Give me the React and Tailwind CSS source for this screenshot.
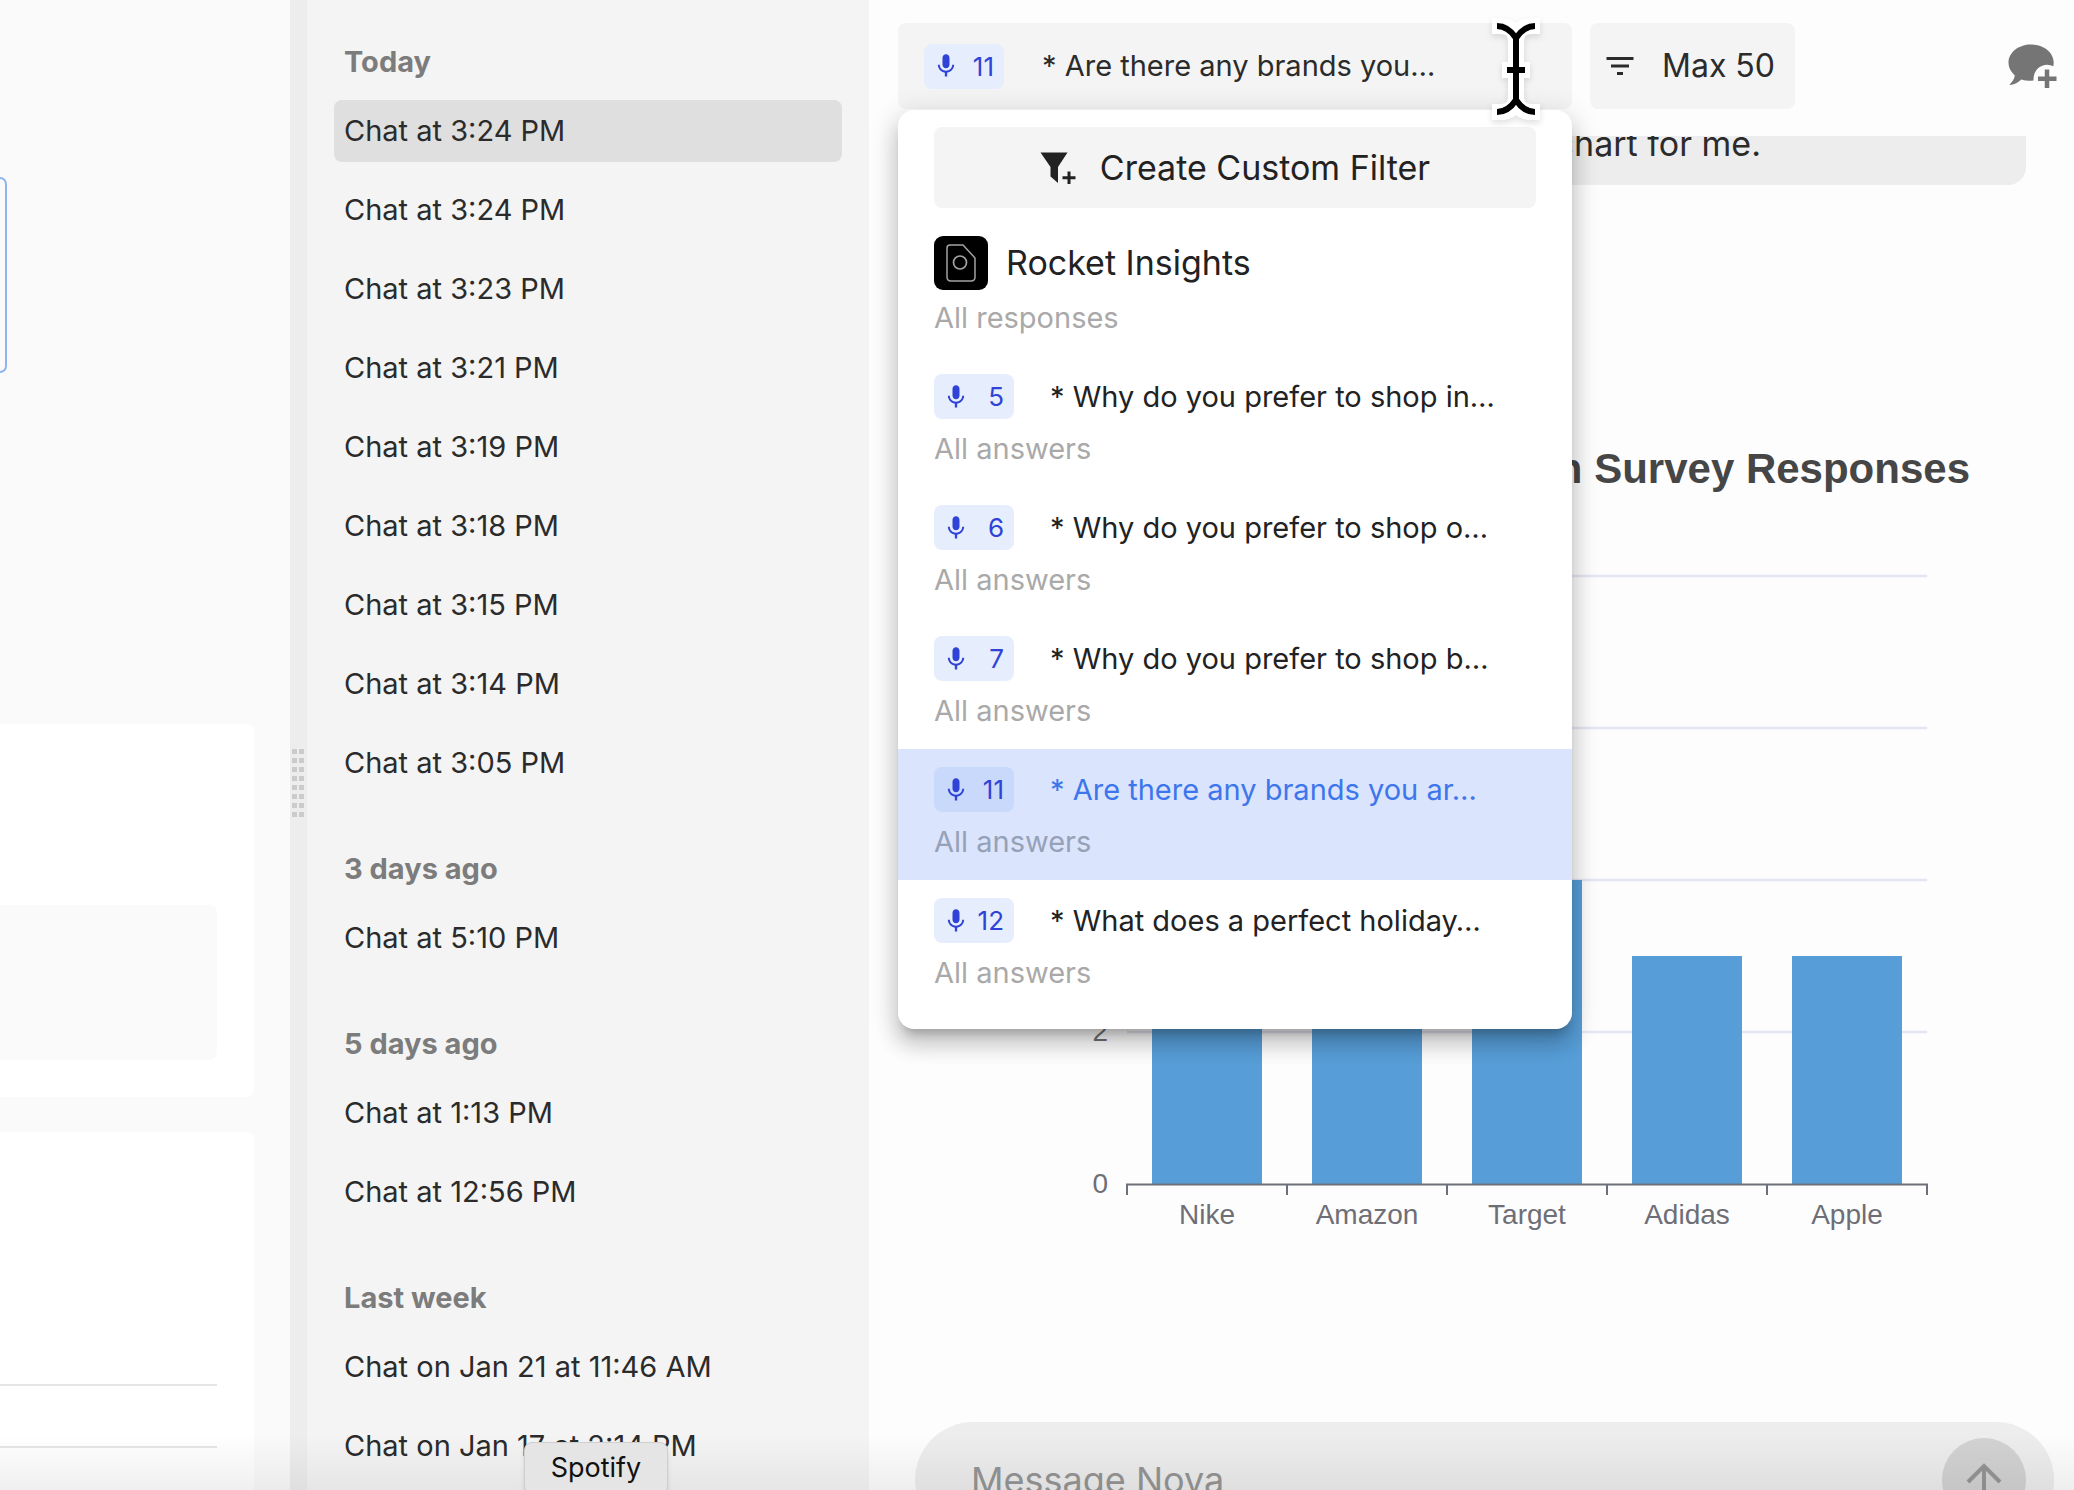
import React from 'react';
import { MdMic, MdFilterList } from 'react-icons/md';

const chatGroups = [
  {
    label: 'Today',
    chats: [
      'Chat at 3:24 PM',
      'Chat at 3:24 PM',
      'Chat at 3:23 PM',
      'Chat at 3:21 PM',
      'Chat at 3:19 PM',
      'Chat at 3:18 PM',
      'Chat at 3:15 PM',
      'Chat at 3:14 PM',
      'Chat at 3:05 PM',
    ],
  },
  { label: '3 days ago', chats: ['Chat at 5:10 PM'] },
  { label: '5 days ago', chats: ['Chat at 1:13 PM', 'Chat at 12:56 PM'] },
  { label: 'Last week', chats: ['Chat on Jan 21 at 11:46 AM', 'Chat on Jan 17 at 2:14 PM'] },
];

const questions = [
  { number: 5, text: '* Why do you prefer to shop in…' },
  { number: 6, text: '* Why do you prefer to shop o…' },
  { number: 7, text: '* Why do you prefer to shop b…' },
  { number: 11, text: '* Are there any brands you ar…', selected: true },
  { number: 12, text: '* What does a perfect holiday…' },
];

const bars = [
  { name: 'Nike', value: 8 },
  { name: 'Amazon', value: 6 },
  { name: 'Target', value: 4 },
  { name: 'Adidas', value: 3 },
  { name: 'Apple', value: 3 },
];

const FilterPlusIcon = () => (
  <svg className="w-9 h-8 shrink-0" viewBox="0 0 36 32" aria-hidden="true">
    <path d="M0.5 0.5H27.5L18 15V31L10.5 24.5V15Z" fill="#222" />
    <path d="M29 19.5V32M22.5 25.8H35.5" stroke="#222" strokeWidth="3" fill="none" />
  </svg>
);

const ChatPlusIcon = () => (
  <svg className="w-[49px] h-11" viewBox="0 0 49 44" aria-hidden="true">
    <path
      d="M23 0.5C10.500 0.500 0.500 8.500 0.500 18.500C0.500 23.500 3 28 6.800 31.300C6.500 34.500 4.500 38 1.200 41C6.500 40.800 10.500 38.500 13.200 35.500C17 36.700 21 37 25.500 36.500C25.200 27.500 30.500 21.500 38.500 20.800C41 20.700 43.500 21.500 45.200 22.300C45.500 21 45.700 19.800 45.700 18.500C45.700 8.500 35.500 0.500 23 0.500Z"
      fill="#757575"
    />
    <path d="M39 25.500V44M30 34.700H48.500" stroke="#757575" strokeWidth="4.500" fill="none" />
  </svg>
);

const RocketLogo = () => (
  <svg className="size-[54px] shrink-0" viewBox="0 0 54 54" aria-hidden="true">
    <rect width="54" height="54" rx="9" fill="#000" />
    <path
      d="M16 9H29L41 22V41Q41 45 37 45H17Q13 45 13 41V12Q13 9 16 9Z"
      fill="none"
      stroke="#a3a3a3"
      strokeWidth="1.500"
    />
    <circle cx="26" cy="26.500" r="6.500" fill="none" stroke="#a3a3a3" strokeWidth="1.700" />
  </svg>
);

const TextCursor = () => (
  <svg
    className="absolute right-8 -top-1.5 w-12 h-[104px] z-20 pointer-events-none overflow-visible drop-shadow-md"
    viewBox="0 0 48 104"
    fill="none"
    aria-hidden="true"
  >
    <g stroke="#fff" strokeWidth="16" strokeLinecap="square">
      <path d="M8 9Q24 9 24 25V79Q24 95 8 95" />
      <path d="M40 9Q24 9 24 25V79Q24 95 40 95" />
      <path d="M18 53H30" />
    </g>
    <g stroke="#000" strokeWidth="6">
      <path d="M5 9Q16 9 24 21V83Q16 95 5 95" />
      <path d="M43 9Q32 9 24 21V83Q32 95 43 95" />
      <path d="M15 53H33" />
    </g>
  </svg>
);

const QuestionBadge = ({ number, selected }) => (
  <span
    className={`flex items-center justify-between w-20 h-[45px] pl-2 pr-2.5 rounded-lg shrink-0 text-[26px] text-[#2f43d6] ${
      selected ? 'bg-[#c9d9fb]' : 'bg-[#e6edfd]'
    }`}
  >
    <MdMic className="size-7" />
    {number}
  </span>
);

const LeftPane = () => (
  <div className="w-[290px] shrink-0 bg-[#fafafa] flex flex-col pt-[177px] overflow-hidden">
    <div className="w-[7px] h-[196px] shrink-0 rounded-r-lg border-2 border-l-0 border-[#8eb4ef]"></div>
    <div className="mt-[351px] mr-9 h-[373px] shrink-0 bg-white rounded-r-lg pt-[181px] pr-[37px]">
      <div className="h-[155px] bg-[#fafafa] rounded-r-lg"></div>
    </div>
    <div className="mt-[35px] mr-9 h-[400px] shrink-0 bg-white rounded-tr-lg pt-[252px] pr-[37px]">
      <div className="h-[60px] border-y-2 border-[#e6e6e6] box-content"></div>
    </div>
  </div>
);

const Resizer = () => (
  <div className="w-[17px] shrink-0 bg-[#ededed] pt-[749px] pl-0.5" role="separator">
    <div className="grid grid-cols-2 gap-x-0.5 gap-y-1 w-3">
      {Array.from({ length: 16 }, (_, i) => (
        <span key={i} className="size-[5px] bg-[#cbcbcb]"></span>
      ))}
    </div>
  </div>
);

const ChatHistory = () => (
  <nav className="w-[562px] shrink-0 bg-[#f4f4f4] pt-[42px] px-[27px] flex flex-col gap-[55px] overflow-hidden">
    {chatGroups.map((group, g) => (
      <section key={group.label}>
        <h2 className="h-10 leading-10 mb-[18px] pl-2.5 text-[29px] font-bold text-[#7c7c7c]">{group.label}</h2>
        <div className="flex flex-col gap-[17px]">
          {group.chats.map((chat, i) => (
            <button
              key={i}
              className={`h-[62px] pl-2.5 rounded-lg text-left text-[29px] text-[#2b2b2b] whitespace-nowrap ${
                g === 0 && i === 0 ? 'bg-[#dfdfdf]' : ''
              }`}
            >
              {chat}
            </button>
          ))}
        </div>
      </section>
    ))}
  </nav>
);

const FilterMenu = () => (
  <div className="absolute top-full left-0 w-full z-10 mt-px pt-[17px] pb-[18px] bg-white rounded-2xl shadow-[0_10px_10px_-6px_rgba(0,0,0,0.2),0_16px_20px_2px_rgba(0,0,0,0.14),0_6px_28px_4px_rgba(0,0,0,0.12)]">
    <div className="px-9">
      <button className="w-full h-[81px] flex items-center justify-center gap-6 bg-[#f4f4f4] rounded-lg text-[34px] text-[#222]">
        <FilterPlusIcon />
        Create Custom Filter
      </button>
    </div>

    {/* Whole project */}
    <button className="w-full mt-[18px] h-[130px] px-9 pt-2.5 flex flex-col text-left">
      <span className="flex items-center gap-[18px] text-[34px] leading-[54px] text-[#222]">
        <RocketLogo />
        Rocket Insights
      </span>
      <span className="mt-2.5 text-[29px] leading-9 text-[#a9a9a9]">All responses</span>
    </button>

    {/* One row for each question */}
    {questions.map((q) => (
      <button
        key={q.number}
        className={`w-full h-[131px] px-9 pt-[18px] flex flex-col text-left ${q.selected ? 'bg-[#dae4fc]' : ''}`}
      >
        <span
          className={`w-full flex items-center gap-9 text-[29px] leading-[45px] whitespace-nowrap ${
            q.selected ? 'text-[#3d76ec]' : 'text-[#222]'
          }`}
        >
          <QuestionBadge number={q.number} selected={q.selected} />
          {q.text}
        </span>
        <span className={`mt-3 text-[29px] leading-9 ${q.selected ? 'text-[#96a1b8]' : 'text-[#a9a9a9]'}`}>
          All answers
        </span>
      </button>
    ))}
  </div>
);

const Toolbar = () => (
  <header className="shrink-0 flex items-center gap-[18px] pt-[23px] pb-[27px] pl-[29px] pr-[17px]">
    <div className="relative w-[674px]">
      <button className="w-full h-[86px] px-[26px] flex items-center gap-[38px] bg-[#f4f4f4] rounded-lg text-[29px] text-[#2b2b2b]">
        <QuestionBadge number={11} />
        * Are there any brands you…
      </button>
      <FilterMenu />
      <TextCursor />
    </div>
    <button className="h-[86px] w-[205px] flex items-center justify-between pl-3 pr-5 bg-[#f4f4f4] rounded-lg text-[32px] text-[#2b2b2b]">
      <MdFilterList className="size-9" />
      Max 50
    </button>
    <button className="ml-auto" aria-label="New chat">
      <ChatPlusIcon />
    </button>
  </header>
);

// 76 units of height per answer
const BarChart = () => (
  <svg
    className="w-full mt-[67px] font-['Liberation_Sans',sans-serif]"
    viewBox="0 0 890 690"
    fontSize="28"
    fill="#6e6e76"
    role="img"
    aria-label="Brand mentions"
  >
    {[0, 2, 4, 6, 8].map((tick) => (
      <g key={tick}>
        {tick > 0 && <path d={`M47 ${624 - tick * 76}H847`} stroke="#e4e6f1" strokeWidth="2.500" />}
        <text x="28" y={633 - tick * 76} textAnchor="end">
          {tick}
        </text>
      </g>
    ))}
    {bars.map((bar, i) => (
      <g key={bar.name}>
        <rect x={72 + i * 160} y={624 - bar.value * 76} width="110" height={bar.value * 76} fill="#579ed8" />
        <text x={127 + i * 160} y="664" textAnchor="middle">
          {bar.name}
        </text>
      </g>
    ))}
    <path
      d="M46 624.500H848M47 624V635M207 624V635M367 624V635M527 624V635M687 624V635M847 624V635"
      stroke="#6e7079"
      strokeWidth="2"
    />
  </svg>
);

const Composer = () => (
  <form className="shrink-0 ml-[46px] mr-5 -mb-12 h-[116px] rounded-full bg-[#ededed] flex items-center pl-14 pr-7">
    <input
      type="text"
      aria-label="Message Nova"
      placeholder="Message Nova"
      className="flex-1 h-12 text-[36px] bg-transparent outline-none placeholder:text-[#959595]"
    />
    <button
      type="button"
      aria-label="Send"
      className="size-[84px] rounded-full bg-[#d2d2d2] flex items-center justify-center"
    >
      <svg className="w-9 h-9" viewBox="0 0 36 36" fill="none" stroke="#959595" strokeWidth="4" aria-hidden="true">
        <path d="M18 36V5M2 20L18 4L34 20" />
      </svg>
    </button>
  </form>
);

export default function App() {
  return (
    <div className="relative h-screen flex overflow-hidden bg-[#fdfdfd] font-['Inter',sans-serif]">
      <LeftPane />
      <Resizer />
      <ChatHistory />

      <main className="flex-1 min-w-0 flex flex-col">
        <Toolbar />
        <div className="flex-1 min-h-0 overflow-hidden">
          {/* Last message, scrolled half under the toolbar */}
          <div className="h-[49px] ml-[231px] mr-12 overflow-hidden flex items-end">
            <p className="w-full shrink-0 bg-[#ededed] rounded-[18px] pt-6 pb-4 pr-[265px] text-right text-[34px] leading-[50px] text-[#2b2b2b]">
              Please create a bar chart for me.
            </p>
          </div>

          <figure className="pl-[211px] pr-[104px] mt-[260px]">
            <figcaption className="font-['Liberation_Sans',sans-serif] font-bold text-[42px] leading-[48px] text-right text-[#464646] whitespace-nowrap">
              Brands in Survey Responses
            </figcaption>
            <BarChart />
          </figure>
        </div>
        <Composer />
      </main>

      {/* Shade and label of the dock below */}
      <div className="absolute inset-x-0 bottom-0 h-14 bg-linear-to-b from-transparent to-black/6 pointer-events-none"></div>
      <div
        role="tooltip"
        className="absolute left-[524px] -bottom-1 w-36 h-[52px] flex items-center justify-center rounded-lg border border-[#cfcfcf] bg-[#e5e5e5] shadow-md text-[27px] text-[#111]"
      >
        Spotify
      </div>
    </div>
  );
}
